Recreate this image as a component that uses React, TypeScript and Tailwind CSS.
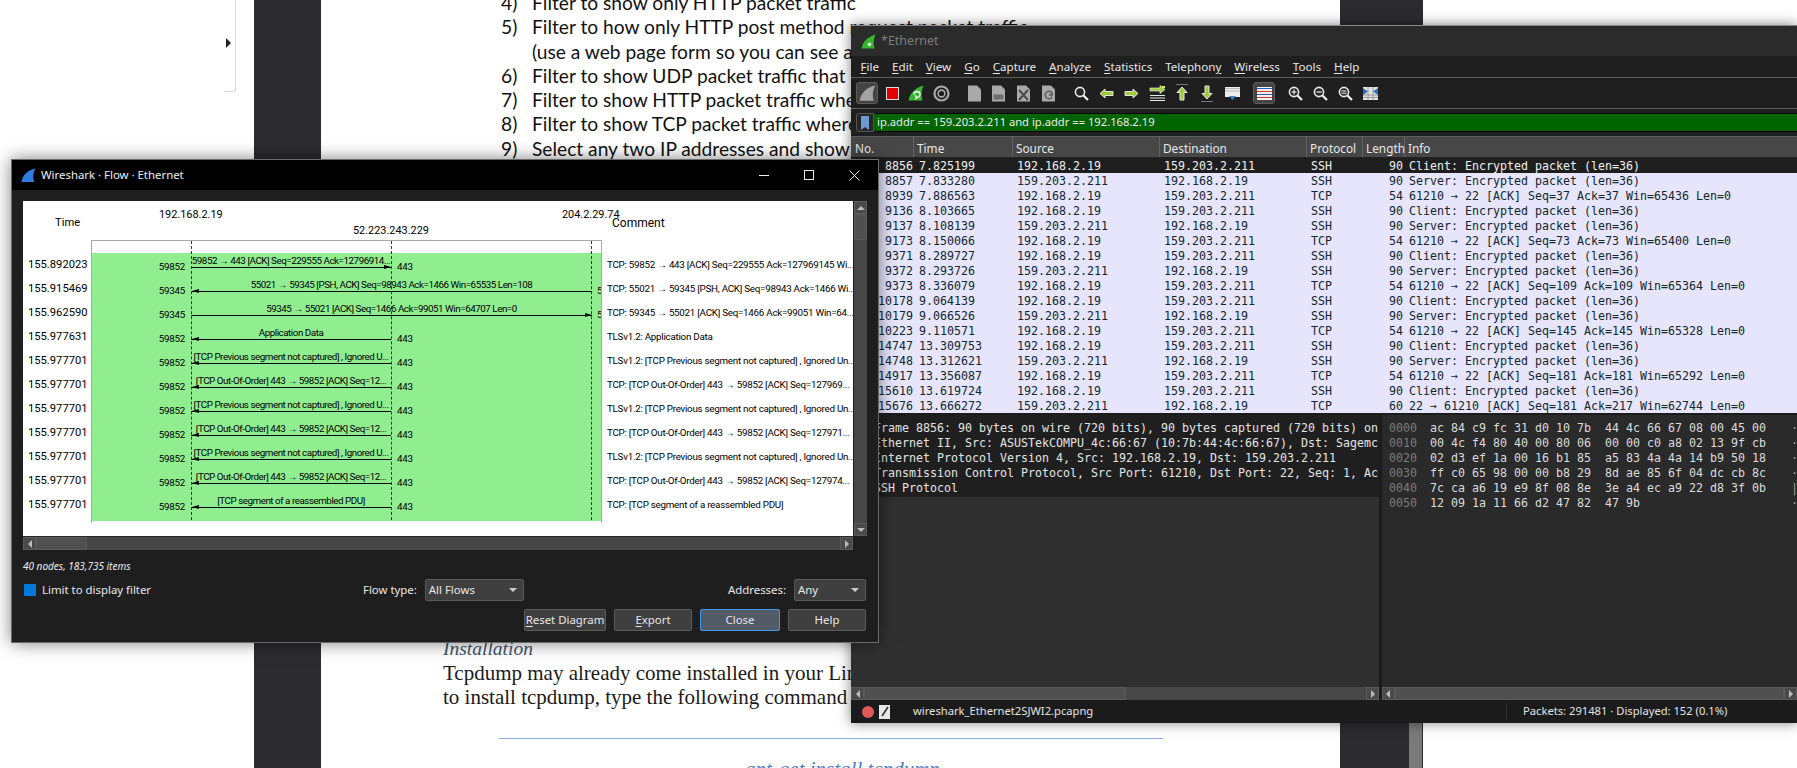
import type { ReactNode } from "react";

type Packet = { no: string; time: string; source: string; dest: string; proto: string; len: string; info: string };
type Flow = {
  time: string;
  left: string;
  right: string;
  dir: "toRight" | "toLeft" | "farLeft" | "farRight";
  label: string;
  comment: string;
};

const CLIENT = "192.168.2.19";
const SERVER = "159.203.2.211";
const ENC_C = "Client: Encrypted packet (len=36)";
const ENC_S = "Server: Encrypted packet (len=36)";

const packets: Packet[] = [
  { no: "8856", time: "7.825199", source: CLIENT, dest: SERVER, proto: "SSH", len: "90", info: ENC_C },
  { no: "8857", time: "7.833280", source: SERVER, dest: CLIENT, proto: "SSH", len: "90", info: ENC_S },
  { no: "8939", time: "7.886563", source: CLIENT, dest: SERVER, proto: "TCP", len: "54", info: "61210 → 22 [ACK] Seq=37 Ack=37 Win=65436 Len=0" },
  { no: "9136", time: "8.103665", source: CLIENT, dest: SERVER, proto: "SSH", len: "90", info: ENC_C },
  { no: "9137", time: "8.108139", source: SERVER, dest: CLIENT, proto: "SSH", len: "90", info: ENC_S },
  { no: "9173", time: "8.150066", source: CLIENT, dest: SERVER, proto: "TCP", len: "54", info: "61210 → 22 [ACK] Seq=73 Ack=73 Win=65400 Len=0" },
  { no: "9371", time: "8.289727", source: CLIENT, dest: SERVER, proto: "SSH", len: "90", info: ENC_C },
  { no: "9372", time: "8.293726", source: SERVER, dest: CLIENT, proto: "SSH", len: "90", info: ENC_S },
  { no: "9373", time: "8.336079", source: CLIENT, dest: SERVER, proto: "TCP", len: "54", info: "61210 → 22 [ACK] Seq=109 Ack=109 Win=65364 Len=0" },
  { no: "10178", time: "9.064139", source: CLIENT, dest: SERVER, proto: "SSH", len: "90", info: ENC_C },
  { no: "10179", time: "9.066526", source: SERVER, dest: CLIENT, proto: "SSH", len: "90", info: ENC_S },
  { no: "10223", time: "9.110571", source: CLIENT, dest: SERVER, proto: "TCP", len: "54", info: "61210 → 22 [ACK] Seq=145 Ack=145 Win=65328 Len=0" },
  { no: "14747", time: "13.309753", source: CLIENT, dest: SERVER, proto: "SSH", len: "90", info: ENC_C },
  { no: "14748", time: "13.312621", source: SERVER, dest: CLIENT, proto: "SSH", len: "90", info: ENC_S },
  { no: "14917", time: "13.356087", source: CLIENT, dest: SERVER, proto: "TCP", len: "54", info: "61210 → 22 [ACK] Seq=181 Ack=181 Win=65292 Len=0" },
  { no: "15610", time: "13.619724", source: CLIENT, dest: SERVER, proto: "SSH", len: "90", info: ENC_C },
  { no: "15676", time: "13.666272", source: SERVER, dest: CLIENT, proto: "TCP", len: "60", info: "22 → 61210 [ACK] Seq=181 Ack=217 Win=62744 Len=0" },
];

const PREV = "[TCP Previous segment not captured] , Ignored U...";
const PREV_C = "TLSv1.2: [TCP Previous segment not captured] , Ignored Un...";
const OOO = "[TCP Out-Of-Order] 443 → 59852 [ACK] Seq=12...";

const flows: Flow[] = [
  { time: "155.892023", left: "59852", right: "443", dir: "toRight", label: "59852 → 443 [ACK] Seq=229555 Ack=12796914...", comment: "TCP: 59852 → 443 [ACK] Seq=229555 Ack=127969145 Wi..." },
  { time: "155.915469", left: "59345", right: "55021", dir: "farLeft", label: "55021 → 59345 [PSH, ACK] Seq=98943 Ack=1466 Win=65535 Len=108", comment: "TCP: 55021 → 59345 [PSH, ACK] Seq=98943 Ack=1466 Wi..." },
  { time: "155.962590", left: "59345", right: "55021", dir: "farRight", label: "59345 → 55021 [ACK] Seq=1466 Ack=99051 Win=64707 Len=0", comment: "TCP: 59345 → 55021 [ACK] Seq=1466 Ack=99051 Win=64..." },
  { time: "155.977631", left: "59852", right: "443", dir: "toLeft", label: "Application Data", comment: "TLSv1.2: Application Data" },
  { time: "155.977701", left: "59852", right: "443", dir: "toLeft", label: PREV, comment: PREV_C },
  { time: "155.977701", left: "59852", right: "443", dir: "toLeft", label: OOO, comment: "TCP: [TCP Out-Of-Order] 443 → 59852 [ACK] Seq=127969..." },
  { time: "155.977701", left: "59852", right: "443", dir: "toLeft", label: PREV, comment: PREV_C },
  { time: "155.977701", left: "59852", right: "443", dir: "toLeft", label: OOO, comment: "TCP: [TCP Out-Of-Order] 443 → 59852 [ACK] Seq=127971..." },
  { time: "155.977701", left: "59852", right: "443", dir: "toLeft", label: PREV, comment: PREV_C },
  { time: "155.977701", left: "59852", right: "443", dir: "toLeft", label: OOO, comment: "TCP: [TCP Out-Of-Order] 443 → 59852 [ACK] Seq=127974..." },
  { time: "155.977701", left: "59852", right: "443", dir: "toLeft", label: "[TCP segment of a reassembled PDU]", comment: "TCP: [TCP segment of a reassembled PDU]" },
];

const menus = [
  { pre: "", u: "F", post: "ile" },
  { pre: "", u: "E", post: "dit" },
  { pre: "", u: "V", post: "iew" },
  { pre: "", u: "G", post: "o" },
  { pre: "", u: "C", post: "apture" },
  { pre: "", u: "A", post: "nalyze" },
  { pre: "", u: "S", post: "tatistics" },
  { pre: "Telephon", u: "y", post: "" },
  { pre: "", u: "W", post: "ireless" },
  { pre: "", u: "T", post: "ools" },
  { pre: "", u: "H", post: "elp" },
];

const details = [
  "Frame 8856: 90 bytes on wire (720 bits), 90 bytes captured (720 bits) on",
  "Ethernet II, Src: ASUSTekCOMPU_4c:66:67 (10:7b:44:4c:66:67), Dst: Sagemc",
  "Internet Protocol Version 4, Src: 192.168.2.19, Dst: 159.203.2.211",
  "Transmission Control Protocol, Src Port: 61210, Dst Port: 22, Seq: 1, Ack",
  "SSH Protocol",
];

const hexRows = [
  ["0000", "ac 84 c9 fc 31 d0 10 7b  44 4c 66 67 08 00 45 00", "·"],
  ["0010", "00 4c f4 80 40 00 80 06  00 00 c0 a8 02 13 9f cb", "·"],
  ["0020", "02 d3 ef 1a 00 16 b1 85  a5 83 4a 4a 14 b9 50 18", "·"],
  ["0030", "ff c0 65 98 00 00 b8 29  8d ae 85 6f 04 dc cb 8c", "·"],
  ["0040", "7c ca a6 19 e9 8f 08 8e  3e a4 ec a9 22 d8 3f 0b", "|"],
  ["0050", "12 09 1a 11 66 d2 47 82  47 9b", "·"],
];

const docLines = [
  { num: "4)", text: "Filter to show only HTTP packet traffic" },
  { num: "5)", text: "Filter to how only HTTP post method request packet traffic" },
  { num: "", text: "(use a web page form so you can see at" },
  { num: "6)", text: "Filter to show UDP packet traffic that co" },
  { num: "7)", text: "Filter to show HTTP packet traffic where" },
  { num: "8)", text: "Filter to show TCP packet traffic where" },
  { num: "9)", text: "Select any two IP addresses and show t" },
];

function Fin({ color = "#2f7de0", size = 22 }: { color?: string; size?: number }) {
  return (
    <svg width={size} height={size} viewBox="0 0 24 24">
      <path d="M2 21 C4 11 11 4 22 2 C18 9 18 15 20 21 Z" fill={color} />
    </svg>
  );
}

function Doc({ children }: { children?: ReactNode }) {
  return (
    <svg width="15" height="17" viewBox="0 0 15 17">
      <path d="M1 0.5 H10 L14 4.5 V16.5 H1 Z" fill="#a9a9a9" />
      {children}
    </svg>
  );
}

function Mag({ sign }: { sign: "plus" | "minus" | "equal" | "none" }) {
  return (
    <svg width="15" height="15" viewBox="0 0 15 15">
      <circle cx="6" cy="6" r="4.6" fill="#262626" stroke="#e8e8e8" strokeWidth="1.6" />
      <path d="M9.5 9.5 L14 14" stroke="#f4f4f4" strokeWidth="2.2" />
      {sign === "plus" && <path d="M3.5 6 H8.5 M6 3.5 V8.5" stroke="#fff" strokeWidth="1.1" />}
      {sign === "minus" && <path d="M3.5 6 H8.5" stroke="#fff" strokeWidth="1.2" />}
      {sign === "equal" && <path d="M3.5 5 H8.5 M3.5 7.2 H8.5" stroke="#fff" strokeWidth="1" />}
    </svg>
  );
}

function GreenArrow({ flip }: { flip?: boolean }) {
  return (
    <svg width="15" height="11" viewBox="0 0 15 11" className={flip ? "rotate-180" : ""}>
      <path d="M1 5.5 L6 1 V3.5 H14 V7.5 H6 V10 Z" fill="#9ccb3c" stroke="#e6e6e6" strokeWidth="1" />
    </svg>
  );
}

function UpDown({ down }: { down?: boolean }) {
  return (
    <svg width="14" height="18" viewBox="0 0 14 18">
      <path d={down ? "M1 17.5 H13" : "M1 0.5 H13"} stroke="#777" />
      <path
        d={down ? "M7 15 L2 9.5 H5 V2 H9 V9.5 H12 Z" : "M7 3 L2 8.5 H5 V16 H9 V8.5 H12 Z"}
        fill="#9ccb3c"
        stroke="#e6e6e6"
      />
    </svg>
  );
}

function Toolbar() {
  return (
    <div className="flex h-[30px] items-center bg-[#1f1f1f] pl-[5px]">
      <span className="flex h-[22px] w-[22px] items-center justify-center rounded-[3px] border border-[#5c5c5c] bg-[#444]">
        <Fin color="#a3a3a3" size={19} />
      </span>
      <span className="ml-[8px] h-[13px] w-[13px] border border-[#ddd] bg-[#e00000]" />
      <span className="ml-[9px]">
        <svg width="16" height="16" viewBox="0 0 16 16">
          <path d="M0.5 15.5 C2 8 7 3 15.5 0.5 C13 6 13 11 14.5 15.5 Z" fill="#35b52e" />
          <path d="M6 9.5 A3 3 0 1 1 9 12.5 M9 12.5 L7 10.5 M9 12.5 L7 14.5" fill="none" stroke="#fff" strokeWidth="1.4" />
        </svg>
      </span>
      <span className="ml-[9px]">
        <svg width="17" height="17" viewBox="0 0 17 17">
          <circle cx="8.5" cy="8.5" r="7" fill="none" stroke="#a8a8a8" strokeWidth="2.2" />
          <circle cx="8.5" cy="8.5" r="3.4" fill="none" stroke="#a8a8a8" strokeWidth="1.6" />
        </svg>
      </span>
      <span className="ml-[17px] flex">
        <Doc />
      </span>
      <span className="ml-[9px] flex">
        <Doc>
          <rect x="2.5" y="9.5" width="10" height="5" fill="#6f6f6f" />
        </Doc>
      </span>
      <span className="ml-[10px] flex">
        <Doc>
          <path d="M3 5 L12 15 M12 5 L3 15" stroke="#4b4b4b" strokeWidth="2" />
        </Doc>
      </span>
      <span className="ml-[10px] flex">
        <Doc>
          <path d="M11 8 A3.7 3.7 0 1 0 11 12 M11 7 V10 H8" fill="none" stroke="#5a5a5a" strokeWidth="1.5" />
        </Doc>
      </span>
      <span className="ml-[18px] flex">
        <Mag sign="none" />
      </span>
      <span className="ml-[10px] flex">
        <GreenArrow />
      </span>
      <span className="ml-[10px] flex">
        <GreenArrow flip />
      </span>
      <span className="ml-[10px]">
        <svg width="17" height="17" viewBox="0 0 17 17">
          <path d="M1 3 H11 V0.5 L16 4.5 L11 8.5 V6 H1 Z" fill="#9ccb3c" stroke="#e6e6e6" strokeWidth="0.7" />
          <path d="M1 10.5 H16 M1 13 H16 M1 15.5 H16" stroke="#e8e8e8" />
          <rect x="13" y="1" width="3" height="2" fill="#e8e060" />
        </svg>
      </span>
      <span className="ml-[9px] flex">
        <UpDown />
      </span>
      <span className="ml-[11px] flex">
        <UpDown down />
      </span>
      <span className="ml-[11px]">
        <svg width="15" height="15" viewBox="0 0 15 15">
          <rect y="1" width="15" height="10" fill="#ececec" />
          <path d="M0 2.5 H15 M0 5 H15" stroke="#bbb" />
          <path d="M4 10 H11 L7.5 14 Z" fill="#3f7fc4" />
        </svg>
      </span>
      <span className="ml-[13px] flex h-[22px] w-[22px] items-center justify-center rounded-[3px] border border-[#5c5c5c] bg-[#444]">
        <svg width="15" height="13" viewBox="0 0 15 13">
          <rect width="15" height="13" fill="#f2f2f2" />
          <path d="M0 1.5 H15" stroke="#3056c8" />
          <path d="M0 4.5 H15" stroke="#d83030" />
          <path d="M0 7.5 H15" stroke="#3056c8" />
          <path d="M0 10.5 H15" stroke="#d83030" />
        </svg>
      </span>
      <span className="ml-[13px] flex">
        <Mag sign="plus" />
      </span>
      <span className="ml-[10px] flex">
        <Mag sign="minus" />
      </span>
      <span className="ml-[10px] flex">
        <Mag sign="equal" />
      </span>
      <span className="ml-[10px]">
        <svg width="15" height="13" viewBox="0 0 15 13">
          <rect width="15" height="13" fill="#e4e4e4" />
          <path d="M5 0 V13 M10 0 V13 M0 8 H15 M0 10.5 H15" stroke="#999" />
          <path d="M0 1 L5 4.5 L0 8 Z M15 1 L10 4.5 L15 8 Z" fill="#2f6fc0" />
        </svg>
      </span>
    </div>
  );
}

function HBar({ thumb }: { thumb: number }) {
  return (
    <div className="flex h-[13px] shrink-0 bg-[#474747]">
      <span className="flex w-[13px] items-center justify-center border border-[#5a5a5a] bg-[#4a4a4a]">
        <span className="h-0 w-0 border-y-[4px] border-r-[4px] border-y-transparent border-r-[#bbb]" />
      </span>
      <span className="border border-[#5a5a5a] bg-[#505050]" style={{ width: thumb }} />
      <span className="flex-1" />
      <span className="flex w-[13px] items-center justify-center border border-[#5a5a5a] bg-[#4a4a4a]">
        <span className="h-0 w-0 border-y-[4px] border-l-[4px] border-y-transparent border-l-[#bbb]" />
      </span>
    </div>
  );
}

function MainWindow() {
  return (
    <div className="absolute left-[851px] top-[25px] flex h-[698px] w-[946px] flex-col overflow-hidden border-t border-[#888] bg-[#1f1f1f] font-['Noto_Sans',sans-serif] text-[12px] text-[#e8e8e8] shadow-[0_0_12px_rgba(0,0,0,0.5)]">
      <div className="flex h-[30px] shrink-0 items-center bg-[#2b2b2b] pl-[10px] text-[#7d7d7d]">
        <svg width="15" height="15" viewBox="0 0 16 16">
          <path d="M0.5 15.5 C2 8 7 3 15.5 0.5 C13 6 13 11 14.5 15.5 Z" fill="#35b52e" />
          <circle cx="9" cy="11" r="2" fill="#d8f0d0" />
        </svg>
        <span className="ml-[5px] text-[12.5px]">*Ethernet</span>
      </div>
      <div className="flex h-[22px] shrink-0 items-center border-b border-[#5f5f5f] pl-[3px] text-[11.6px] leading-[16px]">
        {menus.map((m) => (
          <span key={m.u + m.post} className="px-[6.5px]">
            {m.pre}
            <span className="underline underline-offset-2">{m.u}</span>
            {m.post}
          </span>
        ))}
      </div>
      <Toolbar />
      <div className="flex h-[29px] shrink-0 items-center border-y border-[#5f5f5f] pl-[5px]">
        <span className="flex h-[19px] w-[18px] items-center justify-center rounded-l-[3px] border border-[#555] bg-[#262626]">
          <svg width="8" height="14" viewBox="0 0 8 14">
            <path d="M0 0 H8 V14 L4 11 L0 14 Z" fill="#6f9ad0" />
          </svg>
        </span>
        <span className="flex h-[19px] flex-1 items-center border-y border-black bg-[#006400] pl-[3px] text-[11.2px] text-[#ececec]">
          ip.addr == 159.203.2.211 and ip.addr == 192.168.2.19
        </span>
      </div>
      <div className="flex h-[21px] shrink-0 border-b border-[#222] bg-[#474747] text-[11.8px] leading-[22px] text-[#e8e8e8]">
        <span className="w-[63px] border-r border-[#626262] pl-[4px]">No.</span>
        <span className="w-[99px] border-r border-[#626262] pl-[3px]">Time</span>
        <span className="w-[147px] border-r border-[#626262] pl-[3px]">Source</span>
        <span className="w-[147px] border-r border-[#626262] pl-[3px]">Destination</span>
        <span className="w-[56px] border-r border-[#626262] pl-[3px]">Protocol</span>
        <span className="w-[42px] border-r border-[#626262] pl-[3px]">Length</span>
        <span className="pl-[3px]">Info</span>
      </div>
      <div className="flex shrink-0 flex-col font-['DejaVu_Sans_Mono',monospace] text-[11.63px] leading-[17px]">
        {packets.map((p, i) => (
          <div
            key={p.no}
            className={`flex h-[15px] whitespace-pre ${i === 0 ? "bg-[#1e1e1e] text-[#f0f0f0]" : "bg-[#e6e5fc] text-[#12272e]"}`}
          >
            <span className="w-[63px] pr-[1px] text-right">{p.no}</span>
            <span className="w-[99px] pl-[5px]">{p.time}</span>
            <span className="w-[147px] pl-[4px]">{p.source}</span>
            <span className="w-[147px] pl-[4px]">{p.dest}</span>
            <span className="w-[56px] pl-[4px]">{p.proto}</span>
            <span className="w-[42px] pr-[2px] text-right">{p.len}</span>
            <span className="pl-[4px]">{p.info}</span>
          </div>
        ))}
      </div>
      <div className="h-[2px] shrink-0 bg-[#1c1c1c]" />
      <div className="flex min-h-0 flex-1 bg-[#303030] font-['DejaVu_Sans_Mono',monospace] text-[11.63px] leading-[15px]">
        <div className="flex w-[528px] flex-col overflow-hidden">
          <div className="flex-1 overflow-hidden">
            <div className="bg-[#1f1f1f] pb-[1px] pl-[23px] pt-[6px] text-[#e4e4e4]">
              {details.map((d) => (
                <div key={d} className="h-[15px] overflow-hidden whitespace-pre">
                  {d}
                </div>
              ))}
            </div>
          </div>
          <HBar thumb={262} />
        </div>
        <div className="w-[3px] bg-[#1c1c1c]" />
        <div className="flex min-w-0 flex-1 flex-col overflow-hidden">
          <div className="flex flex-1 overflow-hidden whitespace-pre bg-[#2a2a2a] pt-[6px]">
            <div className="w-[42px] shrink-0 pl-[7px] text-[#7b7b7b]">
              {hexRows.map((r) => (
                <div key={r[0]} className="h-[15px]">
                  {r[0]}
                </div>
              ))}
            </div>
            <div className="w-[367px] shrink-0 pl-[6px] text-[#dcdcdc]">
              {hexRows.map((r) => (
                <div key={r[0]} className="h-[15px]">
                  {r[1]}
                </div>
              ))}
            </div>
            <div className="text-[#9a9a9a]">
              {hexRows.map((r) => (
                <div key={r[0]} className="h-[15px]">
                  {r[2]}
                </div>
              ))}
            </div>
          </div>
          <HBar thumb={395} />
        </div>
      </div>
      <div className="flex h-[23px] shrink-0 items-center bg-[#1b1b1b] pl-[11px] text-[11.2px] text-[#e4e4e4]">
        <span className="h-[12px] w-[12px] rounded-full bg-[#e05858]" />
        <span className="ml-[5px] flex">
          <svg width="11" height="14" viewBox="0 0 11 14">
            <rect width="11" height="14" fill="#e8e8e8" />
            <path d="M3 11 L9 2" stroke="#333" strokeWidth="1.6" />
          </svg>
        </span>
        <span className="ml-[23px] w-[593px]">wireshark_Ethernet2SJWI2.pcapng</span>
        <span className="border-l border-[#333] pl-[16px]">Packets: 291481 · Displayed: 152 (0.1%)</span>
      </div>
    </div>
  );
}

function FlowRow({ row }: { row: Flow }) {
  const far = row.dir === "farLeft" || row.dir === "farRight";
  const lineEnd = far ? 500 : 299;
  const pointLeft = row.dir === "toLeft" || row.dir === "farLeft";
  return (
    <div className="relative h-[24px]">
      <span className="absolute left-0 top-[7px] w-[93px] text-right leading-[14px]">{row.left}</span>
      <span
        className="absolute top-[7px] leading-[14px]"
        style={{ left: far ? 505 : 305 }}
      >
        {row.right}
      </span>
      <span
        className="absolute left-[99px] top-[14px] h-[1px] bg-black"
        style={{ width: lineEnd - 99 }}
      />
      {pointLeft ? (
        <span className="absolute left-[100px] top-[12px] h-0 w-0 border-y-[2.5px] border-r-[7px] border-y-transparent border-r-black" />
      ) : (
        <span
          className="absolute top-[12px] h-0 w-0 border-y-[2.5px] border-l-[7px] border-y-transparent border-l-black"
          style={{ left: lineEnd - 7 }}
        />
      )}
      <span
        className="absolute left-[99px] top-[1px] flex justify-center whitespace-nowrap leading-[14px] tracking-[-0.46px]"
        style={{ width: far ? 401 : 200 }}
      >
        {row.label}
      </span>
    </div>
  );
}

function FlowDialog() {
  return (
    <div className="absolute left-[11px] top-[159px] flex h-[484px] w-[868px] flex-col border border-[#6a6a6a] bg-[#1e1e1e] font-['Noto_Sans',sans-serif] text-[11.4px] text-[#e8e8e8] shadow-[0_0_16px_rgba(0,0,0,0.5)]">
      <div className="flex h-[30px] shrink-0 items-center bg-black pl-[8px]">
        <Fin size={17} />
        <span className="ml-[4px] text-[#f0f0f0]">Wireshark · Flow · Ethernet</span>
        <span className="ml-auto flex items-center gap-[35px] pr-[18px]">
          <span className="h-[1px] w-[10px] bg-[#eee]" />
          <span className="h-[10px] w-[10px] border border-[#eee]" />
          <svg width="11" height="11" viewBox="0 0 11 11">
            <path d="M0.5 0.5 L10.5 10.5 M10.5 0.5 L0.5 10.5" stroke="#eee" />
          </svg>
        </span>
      </div>
      <div className="flex flex-1 flex-col px-[11px] pt-[11px]">
        <div className="flex h-[349px]">
          <div className="flex w-[830px] flex-col">
            <div className="flex h-[335px] flex-col bg-white font-['Roboto',sans-serif] text-[9.8px] tracking-[-0.26px] text-black">
              <div className="relative h-[39px] shrink-0 text-[10.9px] tracking-normal">
                <span className="absolute left-[32px] top-[15px] text-[11.2px] leading-[14px]">Time</span>
                <span className="absolute left-[136px] top-[7px] leading-[14px]">192.168.2.19</span>
                <span className="absolute left-[330px] top-[23px] leading-[14px]">52.223.243.229</span>
                <span className="absolute left-[539px] top-[7px] leading-[14px]">204.2.29.74</span>
                <span className="absolute left-[589px] top-[15px] text-[12px] leading-[14px]">Comment</span>
              </div>
              <div className="flex h-[283px]">
                <div className="w-[68px] shrink-0 pt-[13px] text-[11.2px] tracking-normal">
                  {flows.map((f, i) => (
                    <div key={i} className="flex h-[24px] items-center pl-[5px] leading-[14px]">
                      {f.time}
                    </div>
                  ))}
                </div>
                <div className="relative w-[511px] shrink-0 overflow-hidden border-x border-t border-[#a8a8a8]">
                  <div className="mt-[12px] h-[268px] bg-[#90ee90]">
                    {flows.map((f, i) => (
                      <FlowRow key={i} row={f} />
                    ))}
                  </div>
                  <span className="absolute bottom-[3px] left-[99px] top-0 border-l border-dashed border-[#333]" />
                  <span className="absolute bottom-[3px] left-[299px] top-0 border-l border-dashed border-[#333]" />
                  <span className="absolute bottom-[3px] left-[499px] top-0 border-l border-dashed border-[#333]" />
                </div>
                <div className="min-w-0 flex-1 pt-[13px]">
                  {flows.map((f, i) => (
                    <div key={i} className="flex h-[24px] items-center whitespace-nowrap pl-[5px] leading-[14px]">
                      {f.comment}
                    </div>
                  ))}
                </div>
              </div>
            </div>
            <div className="flex h-[14px] border-t border-[#2a2a2a] bg-[#474747]">
              <span className="flex w-[13px] items-center justify-center border border-[#5a5a5a] bg-[#4a4a4a]">
                <span className="h-0 w-0 border-y-[4px] border-r-[4px] border-y-transparent border-r-[#bbb]" />
              </span>
              <span className="w-[51px] border border-[#5a5a5a] bg-[#505050]" />
              <span className="flex-1" />
              <span className="flex w-[13px] items-center justify-center border border-[#5a5a5a] bg-[#4a4a4a]">
                <span className="h-0 w-0 border-y-[4px] border-l-[4px] border-y-transparent border-l-[#bbb]" />
              </span>
            </div>
          </div>
          <div className="ml-[1px] flex h-[335px] w-[13px] flex-col bg-[#474747]">
            <span className="flex h-[13px] items-center justify-center border border-[#5a5a5a] bg-[#4a4a4a]">
              <span className="h-0 w-0 border-x-[4px] border-b-[4px] border-x-transparent border-b-[#bbb]" />
            </span>
            <span className="h-[26px] border border-[#5a5a5a] bg-[#505050]" />
            <span className="flex-1" />
            <span className="flex h-[13px] items-center justify-center border border-[#5a5a5a] bg-[#4a4a4a]">
              <span className="h-0 w-0 border-x-[4px] border-t-[4px] border-x-transparent border-t-[#bbb]" />
            </span>
          </div>
        </div>
        <div className="mt-[8px] h-[16px] text-[10px] italic leading-[16px] text-[#ededed]">40 nodes, 183,735 items</div>
        <div className="mt-[5px] flex h-[22px] items-center">
          <span className="ml-[1px] h-[12px] w-[12px] bg-[#0078d7]" />
          <span className="ml-[6px] w-[321px]">Limit to display filter</span>
          <span>Flow type:</span>
          <Combo className="ml-[8px] w-[99px]" value="All Flows" />
          <span className="ml-auto">Addresses:</span>
          <Combo className="ml-[8px] mr-[1px] w-[72px]" value="Any" />
        </div>
        <div className="mt-[8px] flex h-[22px] justify-end gap-[8px] pr-[1px]">
          <DlgButton className="w-[82px] border-[#5a5a5a] bg-[#3f3f3f]" u="R" post="eset Diagram" />
          <DlgButton className="w-[78px] border-[#5a5a5a] bg-[#3f3f3f]" u="E" post="xport" />
          <DlgButton className="w-[80px] border-[#3d9be8] bg-[#525a66]" post="Close" />
          <DlgButton className="w-[78px] border-[#5a5a5a] bg-[#3f3f3f]" post="Help" />
        </div>
      </div>
    </div>
  );
}

function Combo({ className, value }: { className: string; value: string }) {
  return (
    <span className={`flex h-[22px] items-center justify-between rounded-[2px] border border-[#5a5a5a] bg-[#3f3f3f] pl-[3px] pr-[6px] ${className}`}>
      {value}
      <span className="h-0 w-0 border-x-[4px] border-t-[4px] border-x-transparent border-t-[#ccc]" />
    </span>
  );
}

function DlgButton({ className, u, post }: { className: string; u?: string; post: string }) {
  return (
    <span className={`flex items-center justify-center rounded-[2px] border ${className}`}>
      <span className="whitespace-nowrap">
        {u && <span className="underline underline-offset-2">{u}</span>}
        {post}
      </span>
    </span>
  );
}

function DocPage() {
  return (
    <div className="flex h-[768px] w-[1797px] overflow-hidden bg-white">
      <div className="w-[254px] shrink-0 pl-[224px]">
        <div className="relative h-[92px] w-[12px] rounded-br-[3px] border-b border-r border-[#d5dbe6]">
          <span className="absolute left-[2px] top-[38px] h-0 w-0 border-y-[5px] border-l-[5px] border-y-transparent border-l-[#222]" />
        </div>
      </div>
      <div className="w-[67px] shrink-0 bg-[#2b2b30]" />
      <div className="w-[1019px] shrink-0 overflow-hidden">
        <div className="-mt-[9px] pl-[180px] font-['Lato',sans-serif] text-[19.2px] leading-[24.3px] text-[#111]">
          {docLines.map((l) => (
            <div key={l.text} className="flex h-[24.3px] whitespace-nowrap">
              <span className="w-[31px]">{l.num}</span>
              <span>{l.text}</span>
            </div>
          ))}
        </div>
        <div className="ml-[122px] mt-[476px] font-['Liberation_Serif',serif] text-[21px] leading-[24px] text-[#1a1a1a]">
          <div className="text-[19.5px] italic text-[#44546a]">Installation</div>
          <div className="whitespace-nowrap">Tcpdump may already come installed in your Linux distribution. If it is not,</div>
          <div className="whitespace-nowrap">to install tcpdump, type the following command</div>
        </div>
        <div className="ml-[178px] mt-[29px] h-[1px] w-[664px] bg-[#8faadc]" />
        <div className="ml-[424px] mt-[18px] font-['Liberation_Serif',serif] text-[21px] italic leading-[24px] text-[#4f7cc9]">
          apt-get install tcpdump
        </div>
      </div>
      <div className="flex w-[83px] shrink-0 justify-end bg-[#2b2b30] pr-[1px]">
        <div className="mt-[720px] h-[48px] w-[13px] bg-[#7a7a7a]" />
      </div>
      <div className="flex-1" />
    </div>
  );
}

export default function App() {
  return (
    <div className="relative h-[768px] w-[1797px] overflow-hidden bg-white">
      <DocPage />
      <MainWindow />
      <FlowDialog />
    </div>
  );
}
